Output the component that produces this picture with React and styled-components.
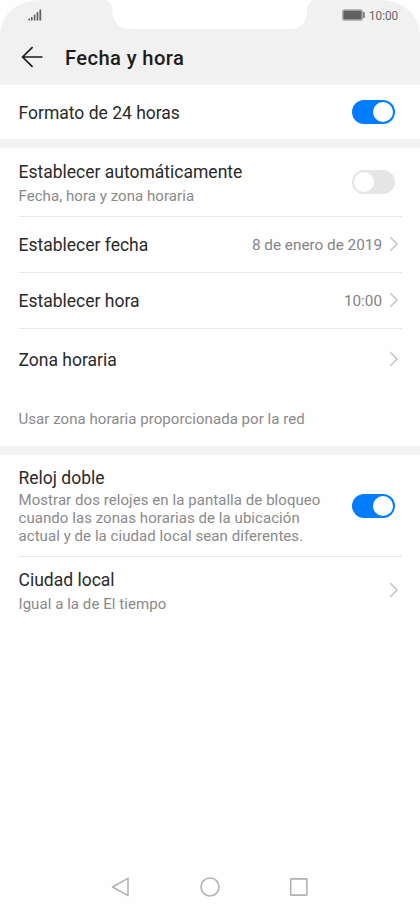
import React, { useState } from "react";
import styled, { createGlobalStyle } from "styled-components";

const Switch = ({ on, onToggle, label }) => (
  <Track type="button" role="switch" aria-checked={on} aria-label={label} $on={on} onClick={onToggle}>
    <Knob />
  </Track>
);

const Chevron = () => (
  <ChevronIcon viewBox="0 0 10 16">
    <path d="M1.3 1.3 L8 8 L1.3 14.7" fill="none" stroke="#c6c6c6" strokeWidth="1.6" />
  </ChevronIcon>
);

const StatusBar = () => (
  <Status>
    <Signal viewBox="0 0 14 12">
      <rect x="0.4" y="9.6" width="1.6" height="1.9" />
      <rect x="3" y="8" width="1.6" height="3.5" />
      <rect x="5.8" y="5.6" width="1.6" height="5.9" />
      <rect x="8.6" y="3.1" width="1.7" height="8.4" />
      <rect x="11.4" y="0.6" width="1.8" height="10.9" />
    </Signal>
    <Notch viewBox="0 0 212 29">
      <path
        d="M0 0 C5.5 0 8.5 5 8.5 11 C8.5 22 15 29 27 29 H186 C197 29 203 21 203 12 C203 5 206 0 212 0 Z"
        fill="#fff"
      />
    </Notch>
    <StatusRight>
      <Battery viewBox="0 0 23 12">
        <rect x="0.8" y="0.9" width="19.4" height="10.2" rx="1.8" fill="#606060" stroke="#aaa" strokeWidth="1.5" />
        <rect x="21" y="3" width="1.7" height="6" rx="0.5" fill="#777" />
      </Battery>
      <Clock>10:00</Clock>
    </StatusRight>
  </Status>
);

const App = () => {
  const [use24h, setUse24h] = useState(true);
  const [auto, setAuto] = useState(false);
  const [dual, setDual] = useState(true);

  return (
    <Screen>
      <GlobalStyle />
      <Header>
        <StatusBar />
        <TitleBar>
          <BackIcon viewBox="0 0 22 22">
            <path d="M11.6 1.2 L1.6 11 L11.6 20.8 M1.6 11 H21.5" fill="none" stroke="#1c1c1c" strokeWidth="1.7" />
          </BackIcon>
          <Title>Fecha y hora</Title>
        </TitleBar>
      </Header>

      <Row $height={54}>
        <Label $drop={2}>Formato de 24 horas</Label>
        <Switch on={use24h} label="Formato de 24 horas" onToggle={() => setUse24h(!use24h)} />
      </Row>
      <Gap />

      <Row $height={69} $line>
        <Texts $gap={5} $drop={3}>
          <Label>Establecer automáticamente</Label>
          <Sub>Fecha, hora y zona horaria</Sub>
        </Texts>
        <Switch on={auto} label="Establecer automáticamente" onToggle={() => setAuto(!auto)} />
      </Row>
      <Row $height={56} $line>
        <Label>Establecer fecha</Label>
        <Value>
          8 de enero de 2019
          <Chevron />
        </Value>
      </Row>
      <Row $height={56} $line>
        <Label>Establecer hora</Label>
        <Value>
          10:00
          <Chevron />
        </Value>
      </Row>
      <Row $height={60}>
        <Label $drop={1}>Zona horaria</Label>
        <Chevron />
      </Row>
      <Note>Usar zona horaria proporcionada por la red</Note>
      <Gap />

      <Row $height={102} $line>
        <Texts $gap={3} $drop={1}>
          <Label>Reloj doble</Label>
          <Sub>
            Mostrar dos relojes en la pantalla de bloqueo
            <br />
            cuando las zonas horarias de la ubicación
            <br />
            actual y de la ciudad local sean diferentes.
          </Sub>
        </Texts>
        <Switch on={dual} label="Reloj doble" onToggle={() => setDual(!dual)} />
      </Row>
      <Row $height={67}>
        <Texts $gap={5} $drop={1}>
          <Label>Ciudad local</Label>
          <Sub>Igual a la de El tiempo</Sub>
        </Texts>
        <Chevron />
      </Row>

      <NavBar>
        <NavIcon viewBox="0 0 20 20">
          <path d="M1.6 10 L17 1.4 V18.6 Z" />
        </NavIcon>
        <NavIcon viewBox="0 0 20 20">
          <circle cx="10" cy="10" r="9" />
        </NavIcon>
        <NavIcon viewBox="0 0 20 20">
          <rect x="1.7" y="1.9" width="16.2" height="16.2" rx="0.5" />
        </NavIcon>
      </NavBar>
    </Screen>
  );
};

export default App;

const GlobalStyle = createGlobalStyle`
  * {
    box-sizing: border-box;
  }

  body {
    margin: 0;
    background: #fff;
    font-family: Roboto, "Liberation Sans", sans-serif;
  }
`;

const Screen = styled.div`
  width: 420px;
  height: 910px;
  display: flex;
  flex-direction: column;
  background: #fefefe;
  overflow: hidden;
`;

const Header = styled.header`
  height: 85px;
  flex-shrink: 0;
  background: #f1f1f1;
  border-radius: 40px 40px 0 0 / 34px 34px 0 0;
`;

const Status = styled.div`
  height: 29px;
  display: flex;
  padding-left: 28px;
`;

const Signal = styled.svg`
  width: 14px;
  height: 12px;
  margin-top: 9px;
  fill: #606060;
`;

const Notch = styled.svg`
  width: 212px;
  height: 29px;
  margin-left: 62px;
`;

const StatusRight = styled.div`
  display: flex;
  align-items: center;
  gap: 4px;
  margin-left: 26px;
`;

const Battery = styled.svg`
  width: 23px;
  height: 12px;
`;

const Clock = styled.span`
  padding-top: 1px;
  font-size: 13.6px;
  color: #666;
  transform: scaleX(0.86);
  transform-origin: left;
`;

const TitleBar = styled.div`
  height: 56px;
  display: flex;
  align-items: center;
  padding-left: 21px;
  gap: 22px;
`;

const BackIcon = styled.svg`
  width: 22px;
  height: 22px;
`;

const Title = styled.h1`
  margin: 0;
  padding-top: 2px;
  font-size: 20.2px;
  font-weight: 500;
  letter-spacing: 0.38px;
  color: #1c1c1c;
`;

const Row = styled.div`
  height: ${({ $height }) => $height}px;
  flex-shrink: 0;
  display: flex;
  align-items: center;
  justify-content: space-between;
  margin: 0 18.5px;
  border-bottom: ${({ $line }) => ($line ? "1px solid #e8e8e8" : "none")};
`;

const Texts = styled.div`
  display: flex;
  flex-direction: column;
  gap: ${({ $gap }) => $gap}px;
  padding-top: ${({ $drop = 0 }) => $drop}px;
`;

const Label = styled.span`
  padding-top: ${({ $drop = 0 }) => $drop}px;
  font-size: 17.5px;
  line-height: 20px;
  color: #2a2a2a;
`;

const Sub = styled.span`
  font-size: 15px;
  line-height: 18px;
  letter-spacing: 0.06px;
  color: #8a8a8a;
`;

const Value = styled.div`
  display: flex;
  align-items: center;
  gap: 7px;
  font-size: 15.3px;
  color: #848484;
`;

const ChevronIcon = styled.svg`
  width: 10px;
  height: 16px;
  margin: 0 2.5px 1px 0;
`;

const Track = styled.button`
  width: 43px;
  height: 24px;
  flex-shrink: 0;
  display: flex;
  align-items: center;
  justify-content: ${({ $on }) => ($on ? "flex-end" : "flex-start")};
  margin-right: 6.5px;
  padding: 0 2px;
  border: none;
  border-radius: 12px;
  background: ${({ $on }) => ($on ? "#007dff" : "#e5e5e5")};
  cursor: pointer;
`;

const Knob = styled.span`
  width: 20px;
  height: 20px;
  border-radius: 50%;
  background: #fff;
`;

const Gap = styled.div`
  height: 9px;
  flex-shrink: 0;
  background: #f3f3f3;
`;

const Note = styled.p`
  height: 57px;
  flex-shrink: 0;
  margin: 0 18.5px;
  padding-top: 20px;
  font-size: 15px;
  line-height: 20px;
  letter-spacing: 0.05px;
  color: #8a8a8a;
`;

const NavBar = styled.nav`
  display: flex;
  justify-content: center;
  gap: 69px;
  margin-top: auto;
  padding-bottom: 13.5px;
`;

const NavIcon = styled.svg`
  width: 20px;
  height: 20px;
  fill: none;
  stroke: #b2b2b2;
  stroke-width: 1.6;
  stroke-linejoin: round;
`;
